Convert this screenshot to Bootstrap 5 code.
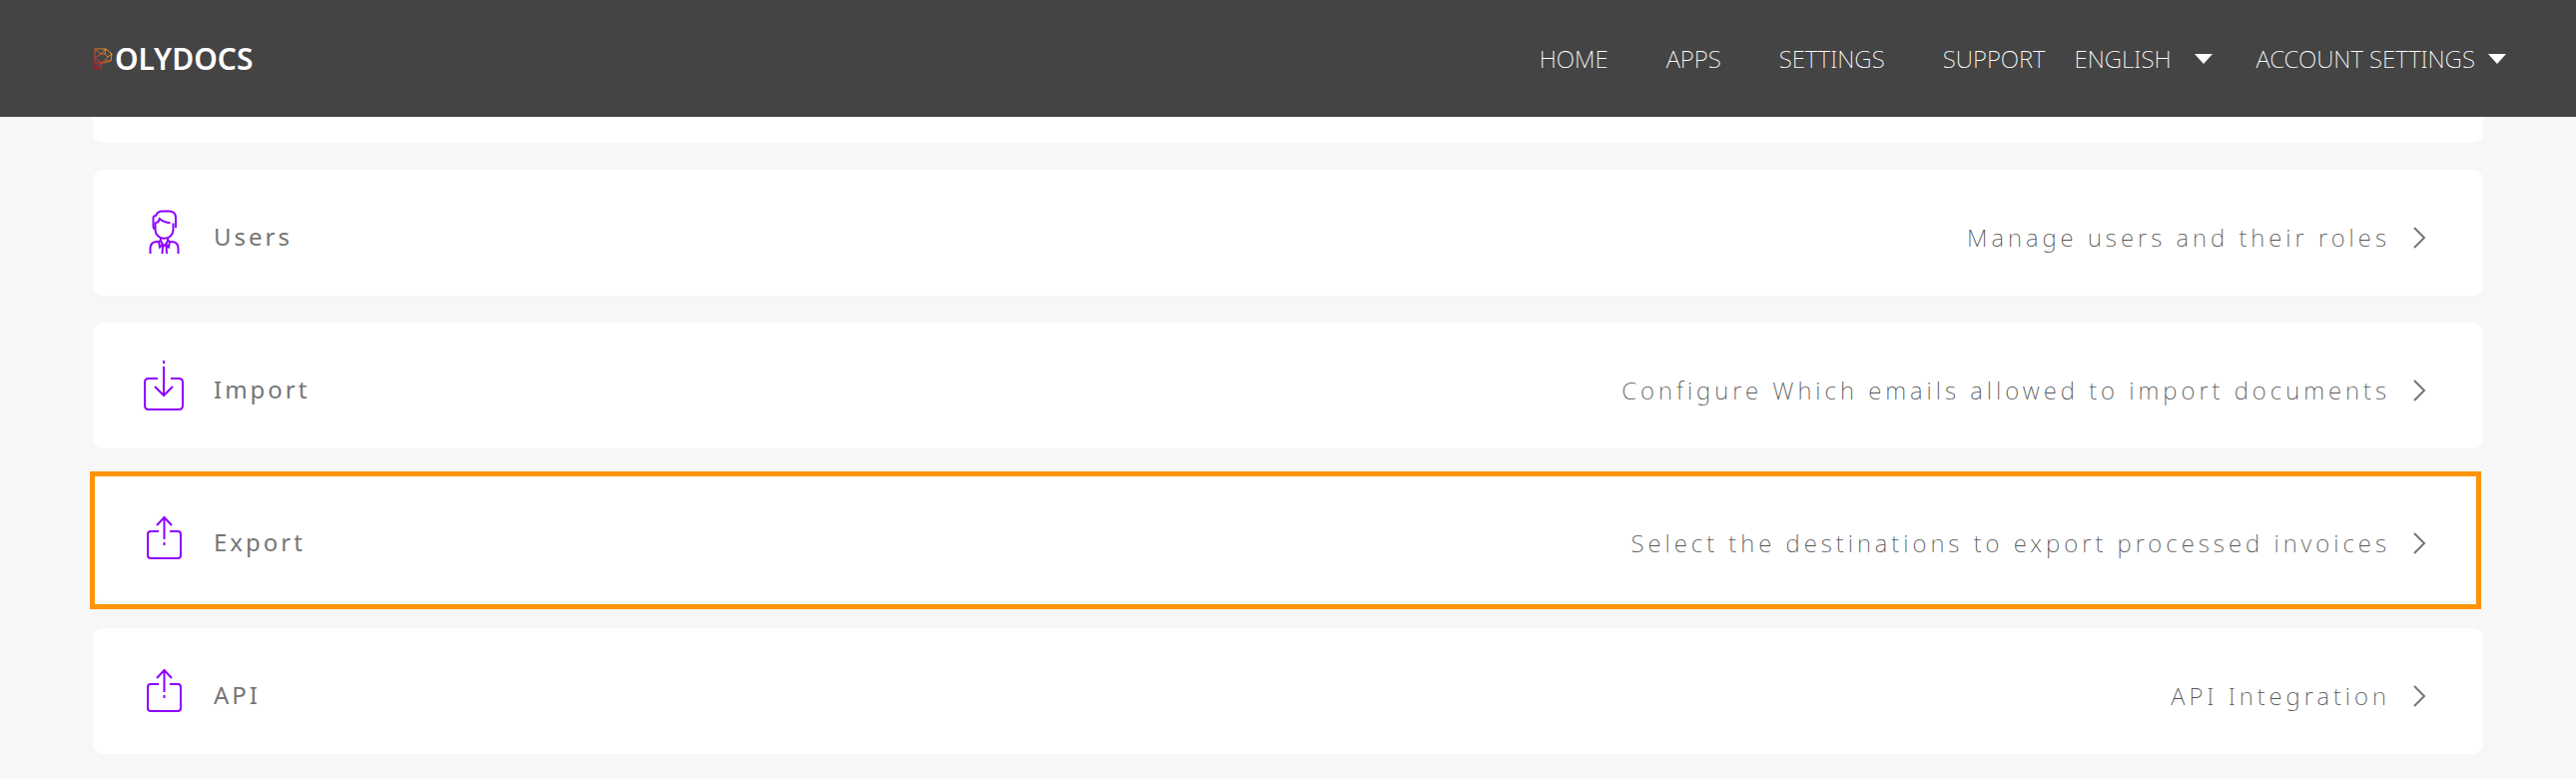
<!DOCTYPE html>
<html lang="en">
<head>
<meta charset="utf-8">
<meta name="viewport" content="width=device-width, initial-scale=1">
<title>Polydocs – Settings</title>
<link href="https://cdn.jsdelivr.net/npm/bootstrap@5.3.0/dist/css/bootstrap.min.css" rel="stylesheet">
<style>
  body { background: #f7f7f7; font-family: "Noto Sans", "Open Sans", sans-serif; font-size: 24px; line-height: 36px; }
  .topbar { background: #444; min-height: 117px; padding: 0 70px 0 93px; }
  .brand-text { font-size: 30px; font-weight: 600; color: #fff; }
  .topbar .nav-link, .menu-btn { color: #fff; font-weight: 200; font-size: 24px; padding: 0; white-space: nowrap; background: none; border: 0; }
  .main-links { gap: 58px; }
  .lang-btn { gap: 23px; margin: 0 44px 0 29px; }
  .account-btn { gap: 13px; }
  .page { padding: 17px 93px 25px; }
  .setting-list { gap: 27px; }
  .setting { background: #fff; border: 0; border-radius: 10px; min-height: 126px; padding: 0 56px 0 50px; color: #757575; }
  .setting-icon { width: 42px; height: 50px; margin: 0 29px 0 0; fill: none; stroke: #8f00ff; stroke-width: 2; }
  .setting-name { letter-spacing: 3px; padding-top: 7px; }
  .setting-desc { font-weight: 200; letter-spacing: 4px; padding-top: 9px; color: #555; }
  .chevron { width: 14px; height: 22px; margin: 10px 0 0 23px; fill: none; stroke: #757575; stroke-width: 2; }
  .marked { margin-right: 2px; padding-right: 54px; }
  .marked::after { content: ""; position: absolute; inset: -4px 0 -8px -3px; border: 5px solid #ff9408; }
</style>
</head>
<body>
<nav class="navbar fixed-top topbar">
  <a class="navbar-brand d-flex align-items-center m-0 p-0" href="#">
    <svg width="22" height="24" viewBox="0 0 22 24" fill="none" stroke-width="1" aria-hidden="true">
      <defs><linearGradient id="pg" x1="1" y1="0" x2="0" y2="1"><stop offset="0" stop-color="#ffb21e"/><stop offset=".5" stop-color="#c8642a"/><stop offset="1" stop-color="#d0021b"/></linearGradient></defs>
      <path stroke="url(#pg)" d="M2 2h11l6 5-1 7-6 2H8v6H2zM2 2l6 5 5-5M8 7L2 11l6 5M8 7l4 0 3 3-3 4-4 2M2 16l6 0-6 6M15 10l4-3M12 7l1-5M12 14l6 0"/>
    </svg>
    <span class="brand-text">OLYDOCS</span>
  </a>
  <div class="d-flex align-items-center">
    <ul class="nav main-links">
      <li class="nav-item"><a class="nav-link" href="#">HOME</a></li>
      <li class="nav-item"><a class="nav-link" href="#">APPS</a></li>
      <li class="nav-item"><a class="nav-link" href="#">SETTINGS</a></li>
      <li class="nav-item"><a class="nav-link" href="#">SUPPORT</a></li>
    </ul>
    <button class="menu-btn lang-btn d-flex align-items-center" type="button">ENGLISH
      <svg width="18" height="10" viewBox="0 0 18 10" aria-hidden="true"><path d="M0 0h18L9 10z" fill="#fff"/></svg></button>
    <button class="menu-btn account-btn d-flex align-items-center" type="button">ACCOUNT SETTINGS
      <svg width="18" height="10" viewBox="0 0 18 10" aria-hidden="true"><path d="M0 0h18L9 10z" fill="#fff"/></svg></button>
  </div>
</nav>

<main class="page">
  <div class="setting-list d-flex flex-column">
    <div class="card setting"></div>

    <a class="card setting flex-row align-items-center text-decoration-none" href="#">
      <svg class="setting-icon" viewBox="0 0 42 50" stroke-width="1.500" aria-hidden="true">
        <path d="M13 21.500q-2.500-.5-2.500-3V9.500q.5-1.500 2.500-1.500Q15 3.500 19 3.500h8q6 .5 6 6.500v10"/>
        <path d="M12.500 15l2.800-.7 1.500-3.300q4 3.500 10.700 4.300"/>
        <path d="M12.500 15v7c0 5 4 8.700 9 8.700s9-3.700 9-8.700v-6.500"/>
        <path d="M7.500 46v-5q0-6.500 6-7h2.500q2-.5 2-3M35.500 46v-5q0-6.500-6-7H27q-2-.5-2-3M16 34l1 5.500 3-3 1.500 1.500 1.500-1.500 3 3 1-5.500M17.500 32l2.500 5M25.500 32L23 37M19.500 46l.5-8M24 46l-.5-8"/>
      </svg>
      <span class="setting-name">Users</span>
      <span class="setting-desc ms-auto">Manage users and their roles</span>
      <svg class="chevron" viewBox="0 0 14 22" aria-hidden="true"><path d="M1 1l10 10L1 21"/></svg>
    </a>

    <a class="card setting flex-row align-items-center text-decoration-none" href="#">
      <svg class="setting-icon" viewBox="0 0 42 50" aria-hidden="true">
        <path d="M15 18H6q-4 0-4 4v23q0 4 4 4h30q4 0 4-4V22q0-4-4-4h-8M21 0v3M21 6v29M12 26l9 9 9-9"/>
      </svg>
      <span class="setting-name">Import</span>
      <span class="setting-desc ms-auto">Configure Which emails allowed to import documents</span>
      <svg class="chevron" viewBox="0 0 14 22" aria-hidden="true"><path d="M1 1l10 10L1 21"/></svg>
    </a>

    <a class="card setting marked flex-row align-items-center text-decoration-none" href="#">
      <svg class="setting-icon" viewBox="0 0 42 50" aria-hidden="true">
        <path d="M16 18H8q-3 0-3 3v21q0 3 3 3h27q3 0 3-3V21q0-3-3-3h-8M21.500 4v22M21.500 29v3M14 12l7.500-8 7.500 8"/>
      </svg>
      <span class="setting-name">Export</span>
      <span class="setting-desc ms-auto">Select the destinations to export processed invoices</span>
      <svg class="chevron" viewBox="0 0 14 22" aria-hidden="true"><path d="M1 1l10 10L1 21"/></svg>
    </a>

    <a class="card setting flex-row align-items-center text-decoration-none" href="#">
      <svg class="setting-icon" viewBox="0 0 42 50" aria-hidden="true">
        <path d="M16 18H8q-3 0-3 3v21q0 3 3 3h27q3 0 3-3V21q0-3-3-3h-8M21.500 4v22M21.500 29v3M14 12l7.500-8 7.500 8"/>
      </svg>
      <span class="setting-name">API</span>
      <span class="setting-desc ms-auto">API Integration</span>
      <svg class="chevron" viewBox="0 0 14 22" aria-hidden="true"><path d="M1 1l10 10L1 21"/></svg>
    </a>
  </div>
</main>
<script src="https://cdn.jsdelivr.net/npm/bootstrap@5.3.0/dist/js/bootstrap.bundle.min.js"></script>
</body>
</html>
